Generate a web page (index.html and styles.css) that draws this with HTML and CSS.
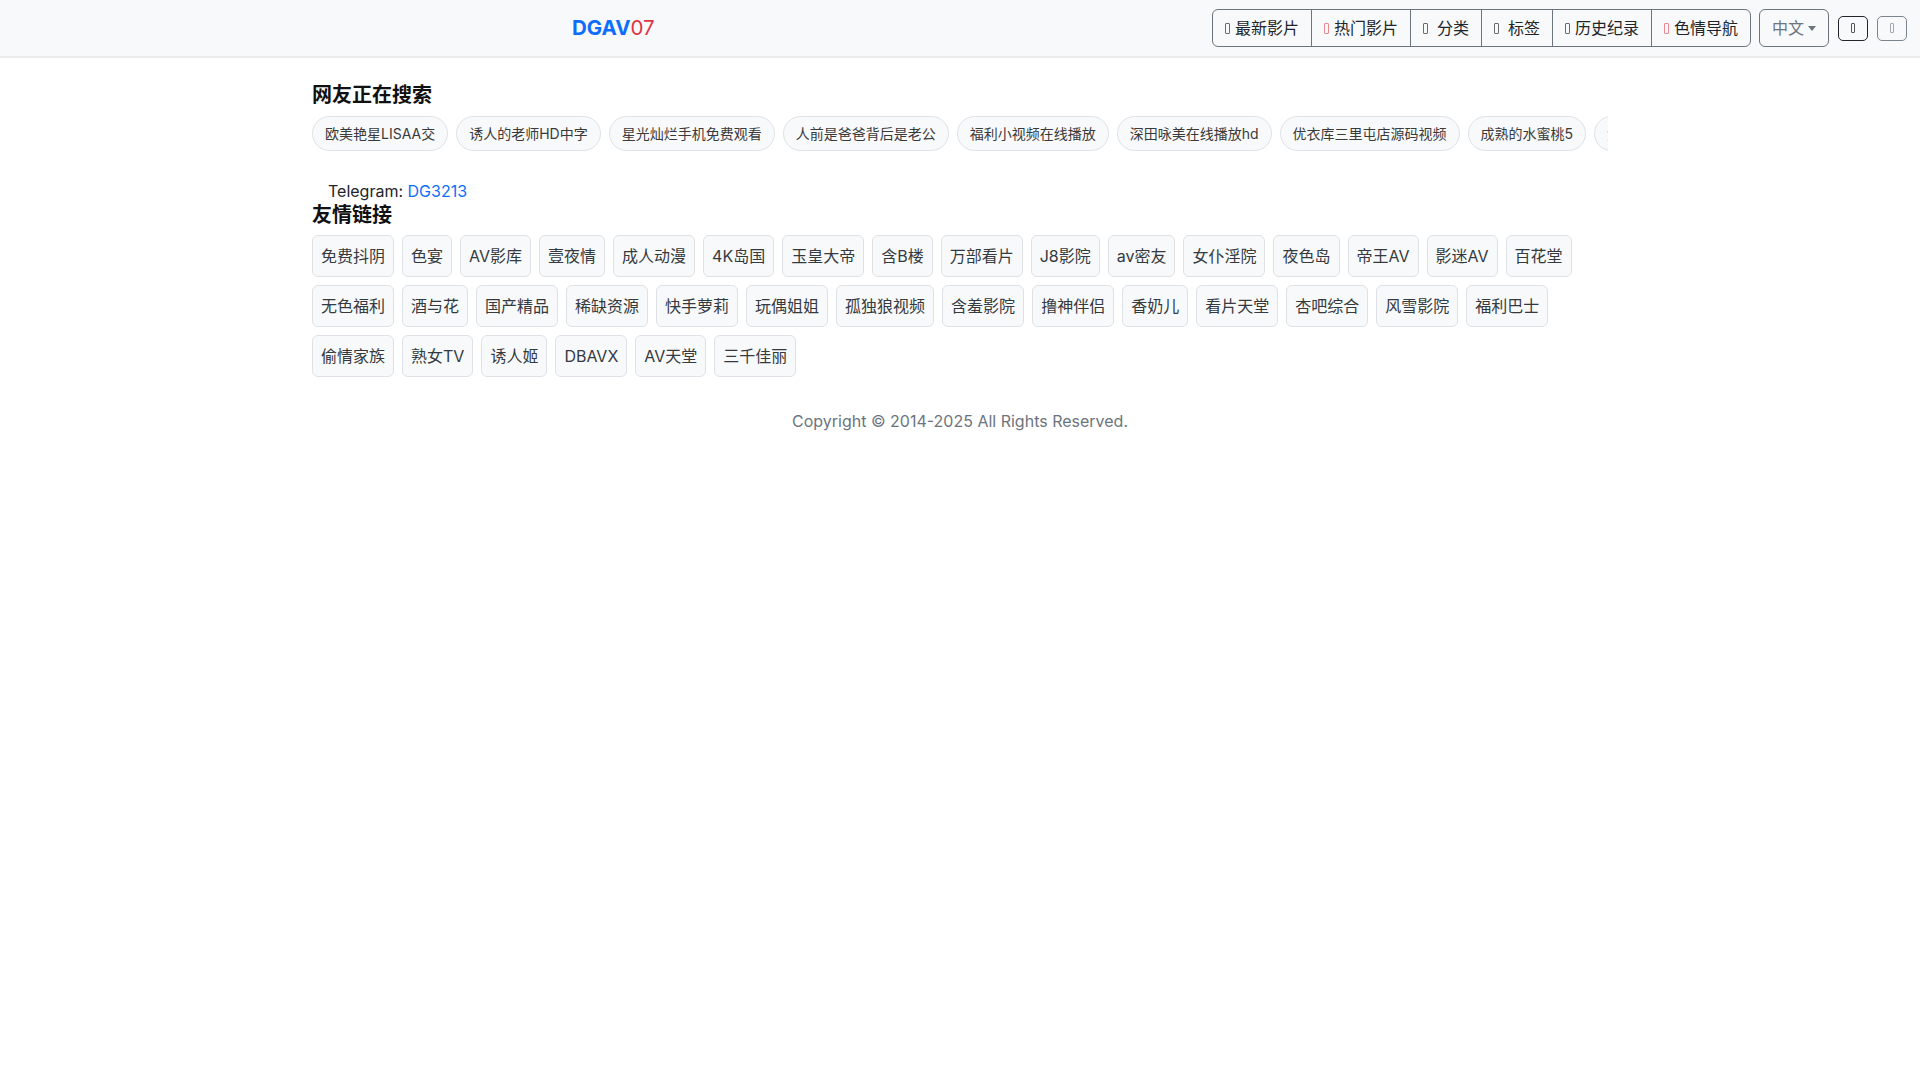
FILE: index.html
```html
<!DOCTYPE html>
<html lang="zh-CN">
<head>
<meta charset="utf-8">
<title>DGAV07</title>
<link rel="stylesheet" href="styles.css">
</head>
<body>
<header class="topbar">
  <a class="brand" href="#">DGAV<span class="num">07</span></a>
  <nav class="nav-right">
    <div class="btn-group">
      <a class="btn" href="#"><span class="ico"></span>最新影片</a>
      <a class="btn" href="#"><span class="ico red"></span>热门影片</a>
      <a class="btn" href="#"><span class="ico wide"></span>分类</a>
      <a class="btn" href="#"><span class="ico wide"></span>标签</a>
      <a class="btn" href="#"><span class="ico"></span>历史纪录</a>
      <a class="btn" href="#"><span class="ico red"></span>色情导航</a>
    </div>
    <button class="dropdown" type="button">中文<span class="caret"></span></button>
    <button class="sm-btn dark" type="button"><span class="ico sm"></span></button>
    <button class="sm-btn gray" type="button"><span class="ico sm"></span></button>
  </nav>
</header>

<main class="container">
  <section class="searching">
    <h5 class="title">网友正在搜索</h5>
    <div class="pills">
      <a class="pill" href="#">欧美艳星LISAA交</a>
      <a class="pill" href="#">诱人的老师HD中字</a>
      <a class="pill" href="#">星光灿烂手机免费观看</a>
      <a class="pill" href="#">人前是爸爸背后是老公</a>
      <a class="pill" href="#">福利小视频在线播放</a>
      <a class="pill" href="#">深田咏美在线播放hd</a>
      <a class="pill" href="#">优衣库三里屯店源码视频</a>
      <a class="pill" href="#">成熟的水蜜桃5</a>
      <a class="pill" href="#">免费观看在线视频</a>
    </div>
  </section>

  <p class="telegram">Telegram: <a href="#">DG3213</a></p>

  <section class="friends">
    <h5 class="title links-title">友情链接</h5>
    <div class="links">
      <a class="link" href="#">免费抖阴</a>
      <a class="link" href="#">色宴</a>
      <a class="link" href="#">AV影库</a>
      <a class="link" href="#">壹夜情</a>
      <a class="link" href="#">成人动漫</a>
      <a class="link" href="#">4K岛国</a>
      <a class="link" href="#">玉皇大帝</a>
      <a class="link" href="#">含B楼</a>
      <a class="link" href="#">万部看片</a>
      <a class="link" href="#">J8影院</a>
      <a class="link" href="#">av密友</a>
      <a class="link" href="#">女仆淫院</a>
      <a class="link" href="#">夜色岛</a>
      <a class="link" href="#">帝王AV</a>
      <a class="link" href="#">影迷AV</a>
      <a class="link" href="#">百花堂</a>
      <a class="link" href="#">无色福利</a>
      <a class="link" href="#">酒与花</a>
      <a class="link" href="#">国产精品</a>
      <a class="link" href="#">稀缺资源</a>
      <a class="link" href="#">快手萝莉</a>
      <a class="link" href="#">玩偶姐姐</a>
      <a class="link" href="#">孤独狼视频</a>
      <a class="link" href="#">含羞影院</a>
      <a class="link" href="#">撸神伴侣</a>
      <a class="link" href="#">香奶儿</a>
      <a class="link" href="#">看片天堂</a>
      <a class="link" href="#">杏吧综合</a>
      <a class="link" href="#">风雪影院</a>
      <a class="link" href="#">福利巴士</a>
      <a class="link" href="#">偷情家族</a>
      <a class="link" href="#">熟女TV</a>
      <a class="link" href="#">诱人姬</a>
      <a class="link" href="#">DBAVX</a>
      <a class="link" href="#">AV天堂</a>
      <a class="link" href="#">三千佳丽</a>
    </div>
  </section>

  <footer class="copyright">Copyright © 2014-2025 All Rights Reserved.</footer>
</main>
</body>
</html>
```

FILE: styles.css
```css
* {
  box-sizing: border-box;
}

html,
body {
  margin: 0;
  padding: 0;
}

body {
  font-family: Inter, "Noto Sans CJK SC", sans-serif;
  font-size: 16px;
  line-height: 1.5;
  color: #212529;
  background: #ffffff;
}

a {
  text-decoration: none;
}

/* ---------- header ---------- */
.topbar {
  height: 58px;
  background: #f8f9fa;
  border-bottom: 2px solid #ececec;
  display: flex;
  align-items: center;
  padding: 0 13px 0 572px;
}

.brand {
  font-size: 20.5px;
  font-weight: 700;
  line-height: 1;
  color: #0d6efd;
}

.brand .num {
  font-weight: 400;
  color: #dc3545;
}

.nav-right {
  margin-left: auto;
  display: flex;
  align-items: center;
  gap: 9px;
}

.btn-group {
  display: flex;
  margin-right: -1px;
}

.btn {
  display: flex;
  align-items: center;
  height: 38px;
  padding: 6px 12px;
  border: 1px solid #6c757d;
  font-size: 16px;
  line-height: 24px;
  color: #212529;
  background: transparent;
  white-space: nowrap;
}

.btn + .btn {
  margin-left: -1px;
}

.btn:first-child {
  border-radius: 6px 0 0 6px;
}

.btn:last-child {
  border-radius: 0 6px 6px 0;
}

.ico {
  display: inline-block;
  width: 5px;
  height: 11px;
  border: 1px solid #6b6b6b;
  border-radius: 1px;
  margin-right: 5px;
  flex: none;
}

.ico.red {
  border-color: #ea8a93;
}

.ico.wide {
  margin-right: 9px;
}

.dropdown {
  display: flex;
  align-items: center;
  height: 38px;
  padding: 6px 12px;
  border: 1px solid #6c757d;
  border-radius: 6px;
  background: transparent;
  color: #6c757d;
  font-family: inherit;
  font-size: 16px;
  line-height: 24px;
}

.caret {
  display: inline-block;
  width: 0;
  height: 0;
  margin-left: 4px;
  border-top: 5px solid #6c757d;
  border-left: 4px solid transparent;
  border-right: 4px solid transparent;
}

.sm-btn {
  width: 30px;
  height: 25px;
  padding: 0;
  border-radius: 5px;
  background: transparent;
  display: flex;
  align-items: center;
  justify-content: center;
}

.sm-btn.dark {
  border: 1px solid #212529;
}

.sm-btn.gray {
  border: 1px solid #7d858c;
}

.ico.sm {
  width: 4px;
  height: 10px;
  margin: 0;
}

.sm-btn.dark .ico.sm {
  border-color: #555;
}

.sm-btn.gray .ico.sm {
  border-color: #a4a9ae;
}

/* ---------- main ---------- */
.container {
  width: 1296px;
  margin: 0 auto;
}

.searching {
  padding-top: 25px;
}

.title {
  margin: 0 0 9px;
  font-size: 20px;
  font-weight: 700;
  line-height: 1.2;
  color: #111;
}

.pills {
  display: flex;
  gap: 8px;
  overflow: hidden;
}

.pill {
  flex: none;
  white-space: nowrap;
  padding: 6px 12px;
  font-size: 14px;
  line-height: 21px;
  color: #3a3a3a;
  background: #f8f9fa;
  border: 1px solid #dee2e6;
  border-radius: 18px;
}

.telegram {
  margin: 28px 0 0;
  padding-left: 16px;
  line-height: 24px;
  color: #212529;
}

.telegram a {
  color: #0d6efd;
}

.links-title {
  margin-bottom: 8px;
}

.links {
  display: flex;
  flex-wrap: wrap;
  gap: 8px;
}

.link {
  padding: 8px;
  font-size: 16px;
  line-height: 24px;
  color: #343a40;
  background: #f8f9fa;
  border: 1px solid #dee2e6;
  border-radius: 6px;
  white-space: nowrap;
}

.copyright {
  margin-top: 32px;
  text-align: center;
  line-height: 24px;
  color: #6c757d;
}
```
